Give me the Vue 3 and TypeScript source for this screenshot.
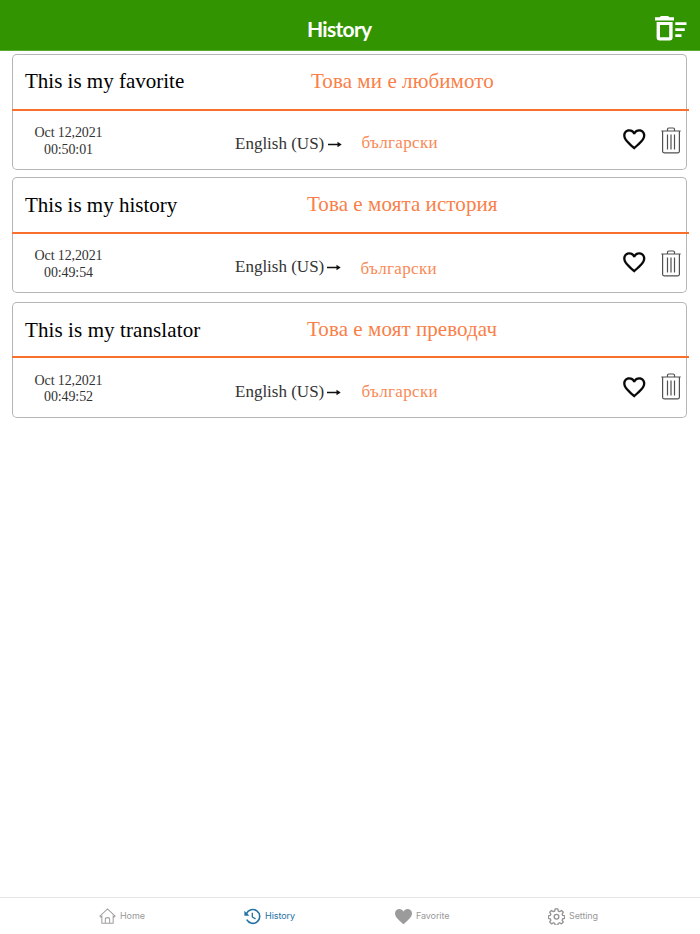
<script setup lang="ts">
interface Entry {
  id: number
  source: string
  result: string
  date: string
  time: string
  from: string
  to: string
}

const entries: Entry[] = [
  { id: 1, source: 'This is my favorite', result: 'Това ми е любимото', date: 'Oct 12,2021', time: '00:50:01', from: 'English (US)', to: 'български' },
  { id: 2, source: 'This is my history', result: 'Това е моята история', date: 'Oct 12,2021', time: '00:49:54', from: 'English (US)', to: 'български' },
  { id: 3, source: 'This is my translator', result: 'Това е моят преводач', date: 'Oct 12,2021', time: '00:49:52', from: 'English (US)', to: 'български' },
]
</script>

<template>
  <div class="screen">
    <header class="bar">
      <h1 class="heading">History</h1>
      <svg class="clear" viewBox="0 0 33 26" fill="#fff">
        <path d="M6 0h7l1.500 1.300H19v3.200H0V1.300h4.500z" />
        <path fill-rule="evenodd" d="M1.600 6h16v15.500q0 3-3 3h-10q-3 0-3-3zM5 9v12.300h9.200V9z" />
        <path d="M20.300 6.200h11.200v2.700H20.300zM20.300 12.200h9.500v2.700h-9.500zM20.300 18.200h6.200v2.700h-6.200z" />
      </svg>
    </header>

    <main class="list">
      <article v-for="e in entries" :key="e.id" class="card">
        <div class="top">
          <p class="source">{{ e.source }}</p>
          <p class="result">{{ e.result }}</p>
        </div>
        <div class="rule"></div>
        <div class="bottom">
          <div class="stamp">
            <span class="date">{{ e.date }}</span>
            <span class="time">{{ e.time }}</span>
          </div>
          <span class="from">{{ e.from }}</span>
          <svg class="arrow" viewBox="0 0 14 7">
            <path d="M0 3.500h11" stroke="#111" stroke-width="1.500" fill="none" />
            <path d="M9.500 .8l4.200 2.700-4.200 2.700z" fill="#111" />
          </svg>
          <span class="to">{{ e.to }}</span>
          <svg class="heart" viewBox="0 0 24 24">
            <path fill="#080808" stroke="#080808" stroke-width=".1" d="M16.500 3c-1.740 0-3.410.81-4.500 2.090C10.910 3.810 9.240 3 7.500 3 4.420 3 2 5.420 2 8.500c0 3.780 3.400 6.860 8.550 11.540L12 21.350l1.450-1.320C18.600 15.360 22 12.280 22 8.500 22 5.420 19.580 3 16.500 3zm-4.400 15.550l-.1.100-.1-.1C7.140 14.240 4 11.390 4 8.500 4 6.500 5.500 5 7.500 5c1.540 0 3.040.99 3.570 2.360h1.870C13.460 5.990 14.960 5 16.500 5c2 0 3.500 1.500 3.500 3.500 0 2.890-3.140 5.740-7.900 10.050z" />
          </svg>
          <svg class="trash" viewBox="0 0 20 27" fill="none" stroke="#505050" stroke-width="1.200">
            <path d="M.3 4h19.400M6.500 4V2.300q0-1.300 1.300-1.300h4.400q1.300 0 1.300 1.300V4M1.600 4v20.300q0 1.500 1.500 1.500h13.800q1.500 0 1.500-1.500V4M6.500 7.500v15M10 7.500v15M13.500 7.500v15" />
          </svg>
        </div>
      </article>
    </main>

    <nav class="tabs">
      <a class="tab home">
        <svg viewBox="0 0 18 18" fill="none" stroke="#a0a0a0" stroke-width="1.100">
          <path d="M1 8.500L9 1l8 7.500-1 1-1-.8V16.200H3V8.700l-1 .8zM6.700 16v-4q0-1.800 2.300-1.800t2.300 1.800v4" />
        </svg>
        <span>Home</span>
      </a>
      <a class="tab history">
        <svg viewBox="0 0 18 18" fill="none" stroke="#2272a4" stroke-width="1.700">
          <path d="M2.600 6.100A7.300 7.300 0 1 1 2.900 12.400" />
          <path d="M.4 2.800v5.400h5.400z" fill="#2272a4" stroke="none" />
          <path d="M8.800 5v4.500l3.400 2" stroke-width="1.400" />
        </svg>
        <span>History</span>
      </a>
      <a class="tab favorite">
        <svg viewBox="0 0 18 18">
          <path fill="#9b9b9b" d="M9 17.300C6 14 0 10 0 5.700 0 2.800 2.200 1 4.600 1 6.600 1 8.100 2 9 3.700 9.900 2 11.400 1 13.400 1 15.800 1 18 2.800 18 5.700 18 10 12 14 9 17.300z" />
        </svg>
        <span>Favorite</span>
      </a>
      <a class="tab setting">
        <svg viewBox="0 0 18 18" fill="none" stroke="#929292" stroke-width="1.400">
          <path stroke-linejoin="round" d="M7.600 1h2.800l.5 2.200 1.400.6 2-1.200 1.900 1.900-1.200 2 .6 1.400 2.100.5v2.500l-2.100.5-.6 1.500 1.200 2-1.900 1.900-2-1.200-1.400.6-.5 2H7.600l-.5-2-1.400-.6-2 1.200-1.900-1.900 1.200-2-.6-1.500-2-.5V8.400l2-.5.6-1.400-1.200-2 1.900-1.900 2 1.200 1.400-.6z" />
          <circle cx="9" cy="9.300" r="2.500" />
        </svg>
        <span>Setting</span>
      </a>
    </nav>
  </div>
</template>

<style>
body {
  background: #fff;
}
</style>

<style scoped>
* {
  box-sizing: border-box;
}
.screen {
  width: 700px;
  height: 934px;
  display: flex;
  flex-direction: column;
  background: #fff;
  font-family: "Liberation Serif", serif;
  white-space: nowrap;
  overflow: hidden;
}
.bar {
  flex: none;
  height: 51px;
  background: #319400;
  border-bottom: 1px solid #5ba936;
  display: grid;
  grid-template-columns: 307px 1fr 33px;
  padding-right: 12px;
}
.heading {
  grid-column: 2;
  margin: 15px 0 0;
  font: 700 21px/28px Lato, sans-serif;
  letter-spacing: -0.700px;
  color: #fff;
}
.clear {
  width: 33px;
  height: 26px;
  margin-top: 16px;
}
.list {
  flex: 1;
  padding: 3px 11px 0 12px;
  display: flex;
  flex-direction: column;
}
.card {
  height: 116px;
  margin-bottom: 7px;
  display: flex;
  flex-direction: column;
}
.card:nth-child(2) {
  margin-bottom: 8.500px;
}
p {
  margin: 0;
}
.top {
  height: 54.500px;
  width: 675px;
  border: 1px solid #b5b5b5;
  border-bottom: 0;
  border-radius: 5px 5px 0 0;
  display: grid;
  grid-template-columns: 282px 1fr;
  padding-left: 12px;
  font-size: 21px;
  line-height: 24px;
}
.source {
  margin-top: 15px;
  color: #000;
}
.card:nth-child(1) .source {
  margin-top: 14px;
}
.card:nth-child(3) .source {
  letter-spacing: 0.100px;
}
.result {
  margin-top: 14px;
  letter-spacing: 0.080px;
  color: #f98048;
}
.card:nth-child(1) .result {
  padding-left: 4px;
}
.rule {
  flex: none;
  height: 2px;
  width: 677px;
  background: #f8702c;
}
.bottom {
  flex: 1;
  width: 675px;
  border: 1px solid #b5b5b5;
  border-top: 0;
  border-radius: 0 0 5px 5px;
  display: grid;
  grid-template-columns: 222px 93px 14px 279px 40px 20px;
  color: #333;
}
.stamp {
  display: flex;
  flex-direction: column;
  align-items: center;
  width: 111px;
  padding-top: 14.500px;
  font-size: 14px;
  line-height: 16.500px;
  letter-spacing: -0.120px;
}
.from {
  margin-top: 23.500px;
  font-size: 17px;
  line-height: 20px;
}
.arrow {
  width: 14px;
  height: 7px;
  margin-top: 30.500px;
}
.card:nth-child(n + 2) .arrow {
  margin-left: -1.500px;
}
.to {
  margin-top: 22.500px;
  padding-left: 19.500px;
  font-size: 17px;
  line-height: 20px;
  letter-spacing: 0.350px;
  color: #f98a58;
}
.card:nth-child(2) .to {
  margin-top: 25.400px;
  padding-left: 18.500px;
}
.card:nth-child(3) .to {
  margin-top: 23.500px;
}
.heart {
  width: 26.500px;
  height: 26.500px;
  margin-top: 15.500px;
}
.trash {
  width: 20px;
  height: 27px;
  margin-top: 16px;
}
.card:nth-child(3) .trash {
  margin-top: 15px;
}
.tabs {
  flex: none;
  height: 37px;
  border-top: 1px solid #e6e6e6;
  display: grid;
  grid-template-columns: 145px 151px 153px 1fr;
  padding-left: 99px;
  font: 9px/12px Inter, sans-serif;
  letter-spacing: -0.100px;
  color: #999;
}
.tab {
  display: flex;
  align-items: center;
  gap: 4px;
}
.tab svg {
  width: 17px;
  height: 17px;
}
.history {
  color: #2272a4;
}
.history span {
  letter-spacing: -0.050px;
}
</style>
